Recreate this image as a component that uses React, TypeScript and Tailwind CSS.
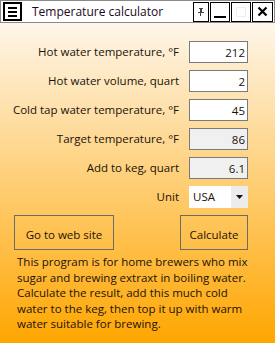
import React, { useState } from 'react';

const rows = [
  { label: 'Hot water temperature, °F', value: '212', readOnly: false },
  { label: 'Hot water volume, quart', value: '2', readOnly: false },
  { label: 'Cold tap water temperature, °F', value: '45', readOnly: false },
  { label: 'Target temperature, °F', value: '86', readOnly: true },
  { label: 'Add to keg, quart', value: '6.1', readOnly: true },
];

const font = { fontFamily: '"Open Sans", "Noto Sans", sans-serif' };

export default function App() {
  const [vals, setVals] = useState(rows.map(r => r.value));

  return (
    <div className="w-[275px] h-[343px] flex flex-col overflow-hidden text-[11.5px] text-[#1b1208]" style={font}>
      {/* title bar */}
      <div className="h-[23px] bg-white border border-b-[#8a8a8a] border-[#8a8a8a] flex items-center pl-[2px] pr-[1px]">
        <div className="w-[19px] h-[19px] border-2 border-black flex flex-col justify-center gap-[2px] px-[3px]">
          <div className="h-[2px] bg-black" />
          <div className="h-[2px] bg-black" />
          <div className="h-[2px] bg-black" />
        </div>
        <span className="ml-[10px] flex-1 text-[12px] text-[#1a0a22]">Temperature calculator</span>
        <div className="flex gap-[1px] h-[20px]">
          <div className="w-[16px] border border-black flex items-center justify-center">
            <svg width="8" height="10" viewBox="0 0 8 10">
              <path d="M2 1h4v1h-1v3h2v1h-3v3h-1v-3h-2v-1h2v-3h-1z" fill="#444" />
            </svg>
          </div>
          <div className="w-[20px] border border-black flex items-end justify-center pb-[3px]">
            <div className="w-[12px] h-[2px] bg-black" />
          </div>
          <div className="w-[20px] border border-black flex items-center justify-center">
            <div className="w-[10px] h-[10px] border border-[#eeeeee]" />
          </div>
          <div className="w-[21px] border border-black flex items-center justify-center">
            <svg width="11" height="11" viewBox="0 0 11 11">
              <path d="M1.5 1.5l8 8M9.5 1.5l-8 8" stroke="black" strokeWidth="2.2" />
            </svg>
          </div>
        </div>
      </div>

      {/* body */}
      <div className="flex-1 flex flex-col bg-[linear-gradient(to_bottom,#fef6ea,#ffa600)] pt-[18px]">
        <div className="flex flex-col gap-[7px]">
          {rows.map((r, i) => (
            <div key={r.label} className="flex items-center">
              <label className="w-[180px] text-right pr-[1px]">{r.label}</label>
              <input
                value={vals[i]}
                readOnly={r.readOnly}
                onChange={e => setVals(v => v.map((x, j) => (j === i ? e.target.value : x)))}
                className={`ml-[9px] w-[59px] h-[22px] border border-[#7a7a7a] text-right pr-[2px] outline-none text-[11.5px] ${r.readOnly ? 'bg-[#f0f0f0]' : 'bg-white'}`}
                style={font}
              />
            </div>
          ))}
          <div className="flex items-center">
            <label className="w-[180px] text-right pr-[1px]">Unit</label>
            <div className="ml-[9px] w-[59px] h-[22px] bg-white flex items-center">
              <span className="flex-1 pl-[4px]">USA</span>
              <div className="w-[17px] h-full bg-[#ececec] flex items-center justify-center">
                <svg width="7" height="4" viewBox="0 0 7 4"><path d="M0 0h7l-3.5 4z" fill="#111" /></svg>
              </div>
            </div>
          </div>
        </div>

        <div className="flex justify-between pl-[14px] pr-[27px] mt-[7px]">
          <button className="w-[100px] h-[35px] border border-[#6b6b6b] pt-[4px]">Go to web site</button>
          <button className="w-[68px] h-[35px] border border-[#6b6b6b] pt-[4px]">Calculate</button>
        </div>

        <p className="ml-[17px] w-[234px] mt-[4px] leading-[15.5px]">
          This program is for home brewers who mix sugar and brewing extraxt in boiling water. Calculate the result, add this much cold water to the keg, then top it up with warm water suitable for brewing.
        </p>
      </div>
    </div>
  );
}
